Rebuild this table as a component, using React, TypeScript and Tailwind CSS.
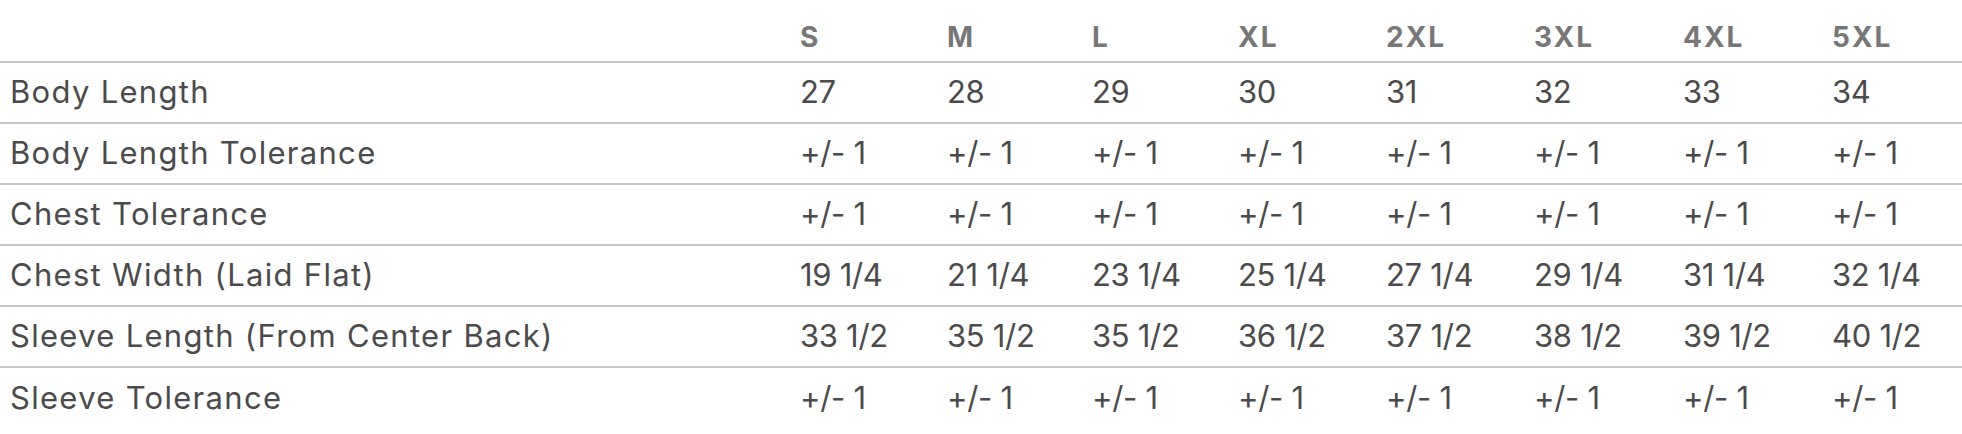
const sizes = ['S', 'M', 'L', 'XL', '2XL', '3XL', '4XL', '5XL']

const rows: [string, string[]][] = [
  ['Body Length', ['27', '28', '29', '30', '31', '32', '33', '34']],
  ['Body Length Tolerance', Array(8).fill('+/- 1')],
  ['Chest Tolerance', Array(8).fill('+/- 1')],
  ['Chest Width (Laid Flat)', ['19 1/4', '21 1/4', '23 1/4', '25 1/4', '27 1/4', '29 1/4', '31 1/4', '32 1/4']],
  ['Sleeve Length (From Center Back)', ['33 1/2', '35 1/2', '35 1/2', '36 1/2', '37 1/2', '38 1/2', '39 1/2', '40 1/2']],
  ['Sleeve Tolerance', Array(8).fill('+/- 1')],
]

const cols = 'grid grid-cols-[790px_147px_145px_146px_148px_148px_149px_149px_1fr]'

export default function App() {
  return (
    <div className="w-[1962px] h-[434px] bg-white overflow-hidden font-['Inter',sans-serif]">
      {/* header */}
      <div className={`${cols} h-[63px] border-b-2 border-[#c6c6c6]`}>
        <div />
        {sizes.map((s) => (
          <div key={s} className="pl-[10px] pt-[23px] text-[28px] leading-[28px] font-bold tracking-[2px] text-[#777777]">
            {s}
          </div>
        ))}
      </div>

      {rows.map(([label, vals], i) => (
        <div
          key={label}
          className={`${cols} h-[61px] items-center text-[31px] text-[#4b4b4b] ${
            i < rows.length - 1 ? 'border-b-2 border-[#c6c6c6]' : ''
          }`}
        >
          <div className="pl-[10px] whitespace-nowrap tracking-[1.3px]">{label}</div>
          {vals.map((v, j) => (
            <div key={j} className="pl-[10px] whitespace-nowrap tracking-[-0.3px]">
              {v}
            </div>
          ))}
        </div>
      ))}
    </div>
  )
}
